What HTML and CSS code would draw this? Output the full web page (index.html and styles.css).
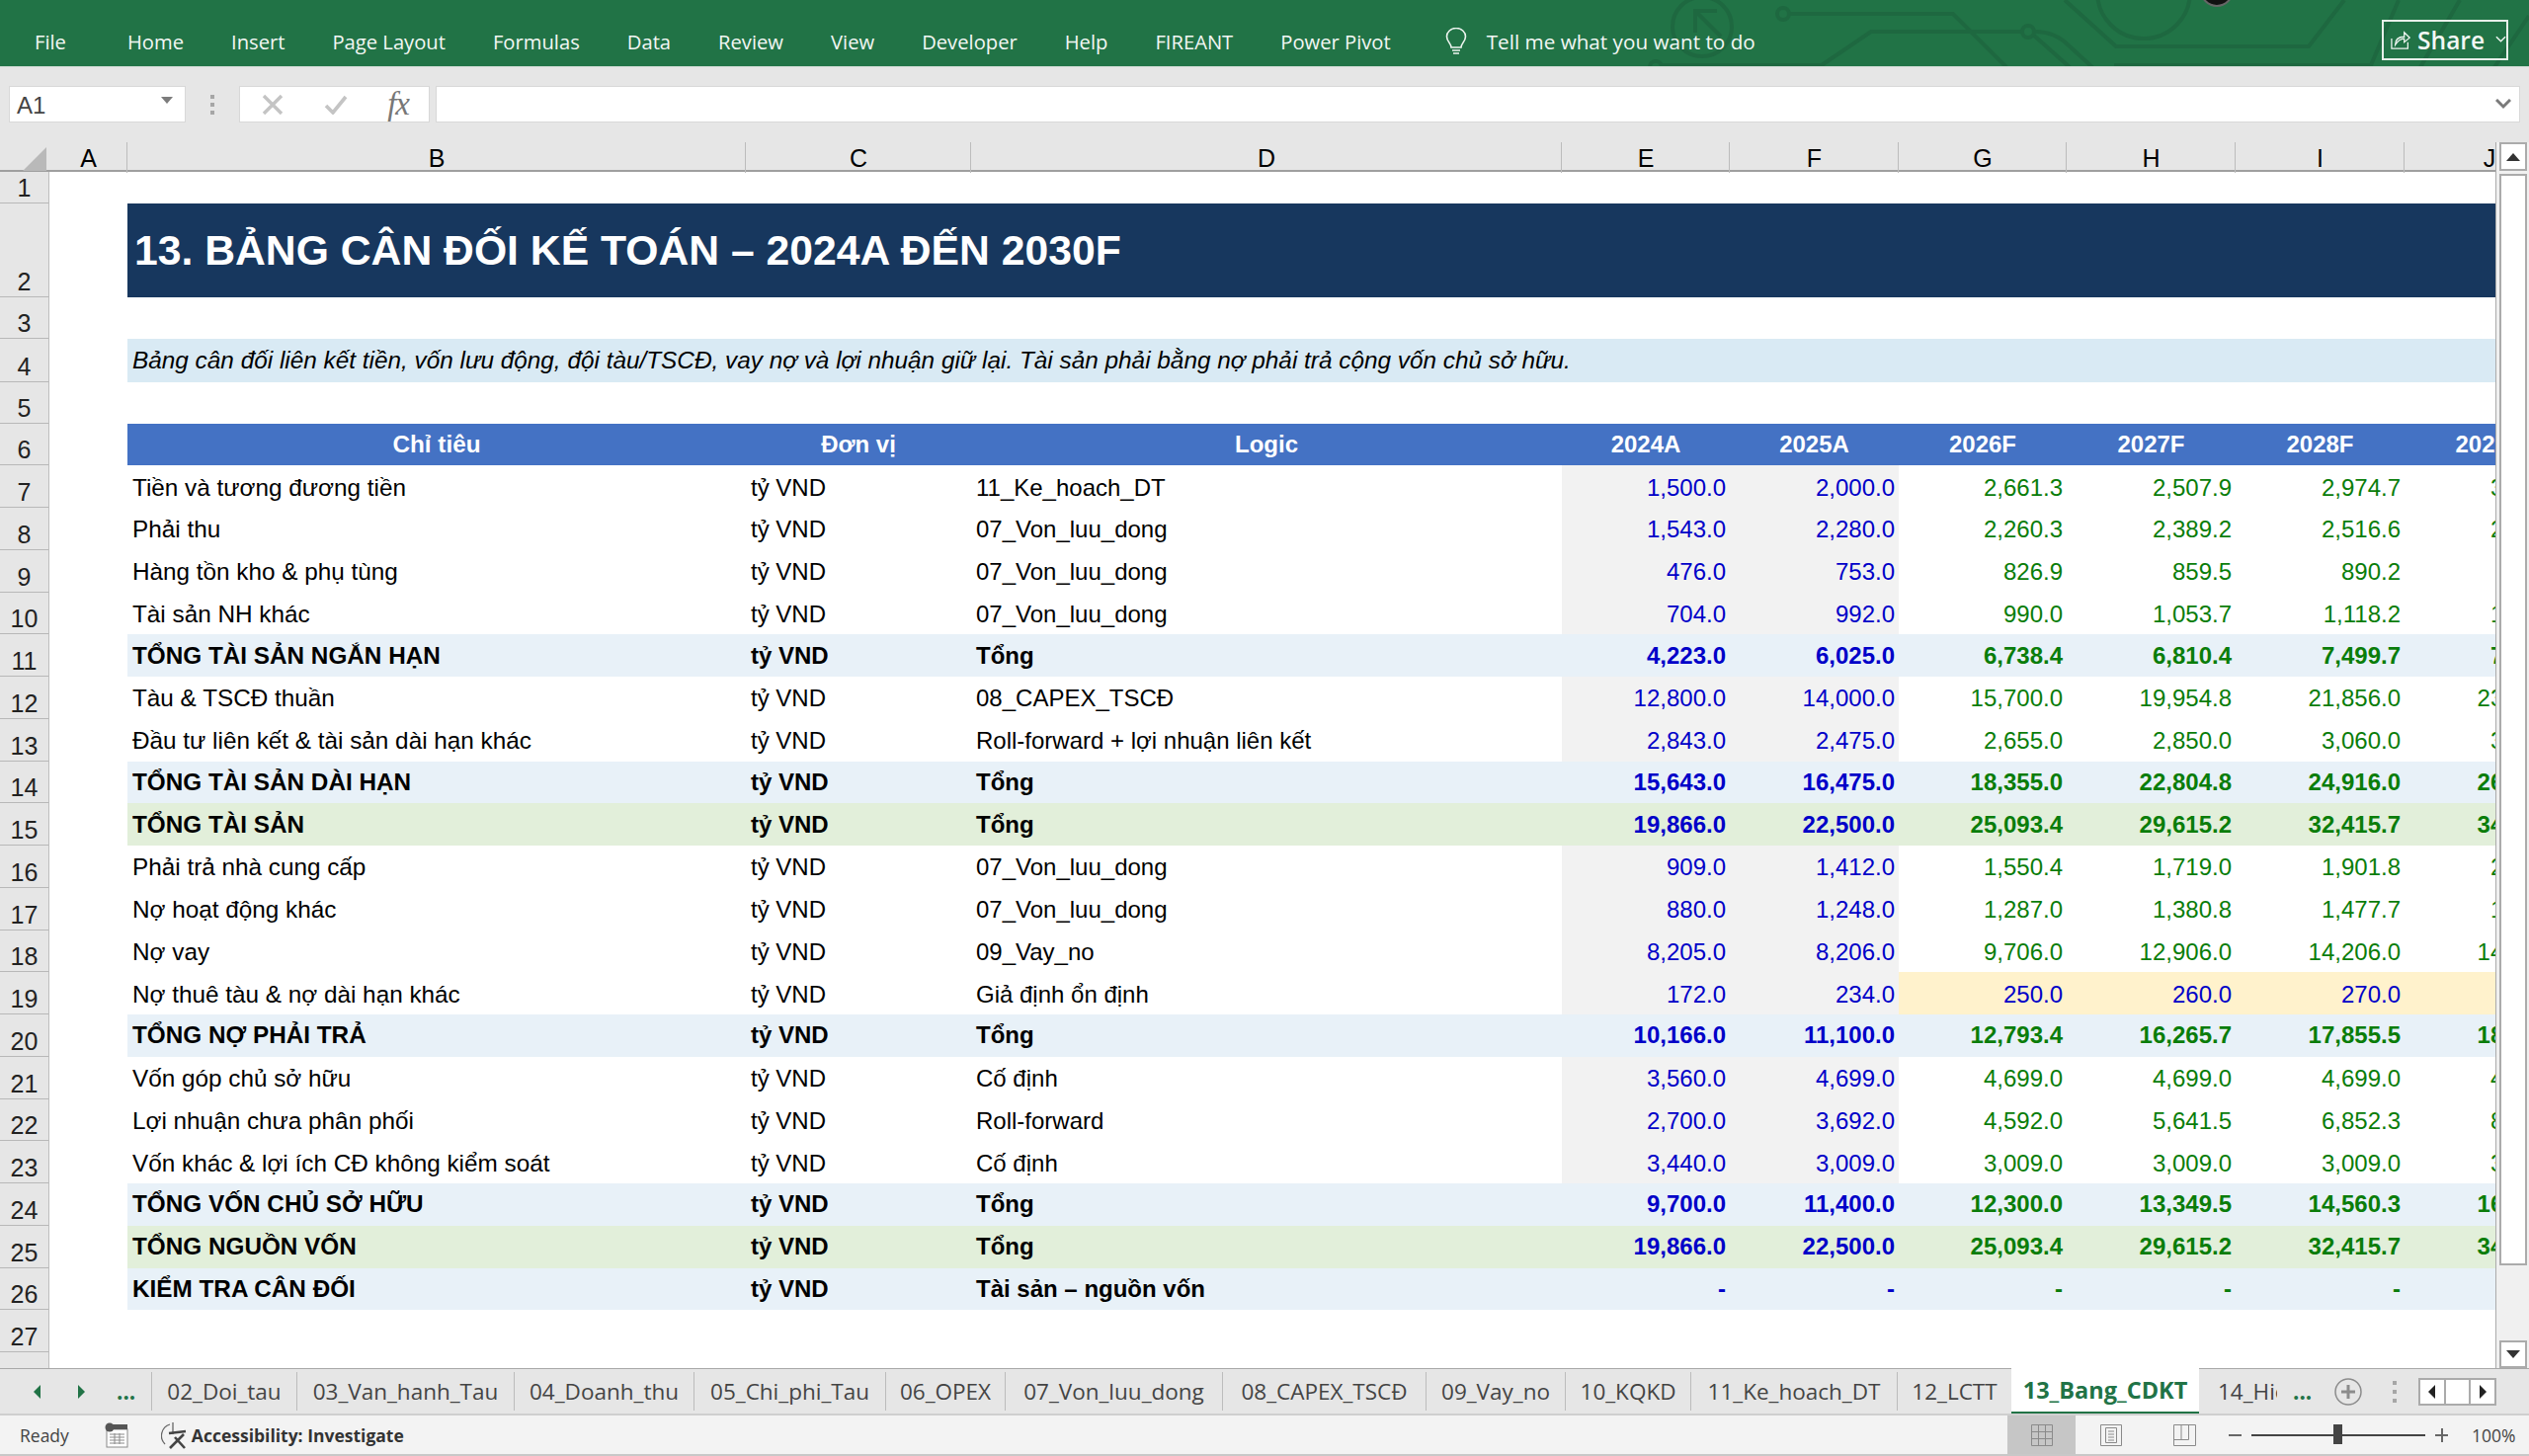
FILE: index.html
```html
<!DOCTYPE html>
<html lang="vi">
<head>
    <meta charset="UTF-8">
    <title>13_Bang_CDKT - Excel</title>
    <link rel="stylesheet" href="styles.css">
</head>
<body>

    <!-- Ribbon tabs -->
    <div class="ribbon">
        <svg class="circuit" width="900" height="68" viewBox="1660 0 900 68" fill="none">
            <circle cx="1723" cy="27" r="30"/>
            <path d="M1738 11h-22v22M1716 11l26 26"/>
            <circle cx="1805" cy="14" r="6"/>
            <path d="M1811 14h166l54 54"/>
            <circle cx="1676" cy="68" r="6"/>
            <path d="M1682 66h162l50-34h152"/>
            <circle cx="2053" cy="32" r="6"/>
            <path d="M2059 36l36 32M2060 32q20 0 34 14l24 22"/>
            <path d="M2090 0l52 47h195l36-47"/>
            <path d="M2123-8a47 47 0 0 0 94 0"/>
            <path d="M2140 66h260l28-66M2450 68l40-68M2525 68l35-52"/>
            <circle class="avatar" cx="2244" cy="-10" r="16"/>
        </svg>
        <div class="tab-list">
            <span class="tab tab--file">File</span>
            <span class="tab">Home</span>
            <span class="tab">Insert</span>
            <span class="tab">Page Layout</span>
            <span class="tab">Formulas</span>
            <span class="tab">Data</span>
            <span class="tab">Review</span>
            <span class="tab">View</span>
            <span class="tab">Developer</span>
            <span class="tab">Help</span>
            <span class="tab">FIREANT</span>
            <span class="tab">Power Pivot</span>
        </div>
        <div class="tell-me">
            <svg width="22" height="28" viewBox="0 0 22 28" fill="none" stroke="#eef5f0" stroke-width="1.6">
                <path d="M6 20c0-4-4.5-6-4.5-11a9.5 8.5 0 0 1 19 0c0 5-4.500 7-4.500 11z"/>
                <path d="M7 23h8M8 26h6"/>
            </svg>
            <span>Tell me what you want to do</span>
        </div>
        <div class="share-btn">
            <svg width="22" height="22" viewBox="0 0 22 22" fill="none" stroke="#eef5f0" stroke-width="1.4">
                <path d="M1 10v11h18v-7M5 17c0-6 4-9 10-9V3l6 6-6 5v-4c-4 0-7 2-10 7z"/>
            </svg>
            <span>Share</span>
            <svg width="12" height="8" viewBox="0 0 12 8" fill="none" stroke="#eef5f0" stroke-width="1.6">
                <path d="M1 1l5 5 5-5"/>
            </svg>
        </div>
    </div>

    <!-- Name box and formula input -->
    <div class="formula-bar">
        <div class="name-box">
            <span>A1</span>
            <i class="caret-down"></i>
        </div>
        <div class="grip"><i></i><i></i><i></i></div>
        <div class="fx-box">
            <svg width="22" height="22" viewBox="0 0 22 22" fill="none" stroke="#c4c4c4" stroke-width="3.400">
                <path d="M2 2l18 18M20 2L2 20"/>
            </svg>
            <svg width="24" height="20" viewBox="0 0 24 20" fill="none" stroke="#c4c4c4" stroke-width="3.600">
                <path d="M2 11l7 7L22 2"/>
            </svg>
            <span class="fx-label">fx</span>
        </div>
        <div class="formula-input">
            <svg width="16" height="11" viewBox="0 0 16 11" fill="none" stroke="#7a7a7a" stroke-width="3">
                <path d="M1 1l7 7 7-7"/>
            </svg>
        </div>
    </div>

    <!-- Sheet -->
    <div class="sheet-area">
        <div class="grid">
            <div class="row col-heads">
                <div class="corner"><i></i></div>
                <div class="col-head">A</div>
                <div class="col-head">B</div>
                <div class="col-head">C</div>
                <div class="col-head">D</div>
                <div class="col-head">E</div>
                <div class="col-head">F</div>
                <div class="col-head">G</div>
                <div class="col-head">H</div>
                <div class="col-head">I</div>
                <div class="col-head">J</div>
            </div>

            <div class="row r1"><div class="rn">1</div></div>
            <div class="row r2">
                <div class="rn">2</div>
                <div class="title-cell">13. BẢNG CÂN ĐỐI KẾ TOÁN – 2024A ĐẾN 2030F</div>
            </div>
            <div class="row r3"><div class="rn">3</div></div>
            <div class="row r4">
                <div class="rn">4</div>
                <div class="note-cell">Bảng cân đối liên kết tiền, vốn lưu động, đội tàu/TSCĐ, vay nợ và lợi nhuận giữ lại. Tài sản phải bằng nợ phải trả cộng vốn chủ sở hữu.</div>
            </div>
            <div class="row r5"><div class="rn">5</div></div>

            <div class="row row--head">
                <div class="rn">6</div><div></div>
                <div class="cell">Chỉ tiêu</div><div class="cell">Đơn vị</div><div class="cell">Logic</div>
                <div class="cell">2024A</div><div class="cell">2025A</div><div class="cell">2026F</div><div class="cell">2027F</div><div class="cell">2028F</div><div class="cell">2029F</div>
            </div>

            <div class="row">
                <div class="rn">7</div><div></div>
                <div class="cell">Tiền và tương đương tiền</div><div class="cell">tỷ VND</div><div class="cell">11_Ke_hoach_DT</div>
                <div class="cell num hist">1,500.0</div><div class="cell num hist">2,000.0</div>
                <div class="cell num calc">2,661.3</div><div class="cell num calc">2,507.9</div><div class="cell num calc">2,974.7</div><div class="cell num calc">3,412.6</div>
            </div>
            <div class="row">
                <div class="rn">8</div><div></div>
                <div class="cell">Phải thu</div><div class="cell">tỷ VND</div><div class="cell">07_Von_luu_dong</div>
                <div class="cell num hist">1,543.0</div><div class="cell num hist">2,280.0</div>
                <div class="cell num calc">2,260.3</div><div class="cell num calc">2,389.2</div><div class="cell num calc">2,516.6</div><div class="cell num calc">2,640.7</div>
            </div>
            <div class="row">
                <div class="rn">9</div><div></div>
                <div class="cell">Hàng tồn kho &amp; phụ tùng</div><div class="cell">tỷ VND</div><div class="cell">07_Von_luu_dong</div>
                <div class="cell num hist">476.0</div><div class="cell num hist">753.0</div>
                <div class="cell num calc">826.9</div><div class="cell num calc">859.5</div><div class="cell num calc">890.2</div><div class="cell num calc">919.0</div>
            </div>
            <div class="row">
                <div class="rn">10</div><div></div>
                <div class="cell">Tài sản NH khác</div><div class="cell">tỷ VND</div><div class="cell">07_Von_luu_dong</div>
                <div class="cell num hist">704.0</div><div class="cell num hist">992.0</div>
                <div class="cell num calc">990.0</div><div class="cell num calc">1,053.7</div><div class="cell num calc">1,118.2</div><div class="cell num calc">1,180.9</div>
            </div>
            <div class="row row--sub">
                <div class="rn">11</div><div></div>
                <div class="cell">TỔNG TÀI SẢN NGẮN HẠN</div><div class="cell">tỷ VND</div><div class="cell">Tổng</div>
                <div class="cell num hist">4,223.0</div><div class="cell num hist">6,025.0</div>
                <div class="cell num calc">6,738.4</div><div class="cell num calc">6,810.4</div><div class="cell num calc">7,499.7</div><div class="cell num calc">7,953.2</div>
            </div>
            <div class="row">
                <div class="rn">12</div><div></div>
                <div class="cell">Tàu &amp; TSCĐ thuần</div><div class="cell">tỷ VND</div><div class="cell">08_CAPEX_TSCĐ</div>
                <div class="cell num hist">12,800.0</div><div class="cell num hist">14,000.0</div>
                <div class="cell num calc">15,700.0</div><div class="cell num calc">19,954.8</div><div class="cell num calc">21,856.0</div><div class="cell num calc">23,500.0</div>
            </div>
            <div class="row">
                <div class="rn">13</div><div></div>
                <div class="cell">Đầu tư liên kết &amp; tài sản dài hạn khác</div><div class="cell">tỷ VND</div><div class="cell">Roll-forward + lợi nhuận liên kết</div>
                <div class="cell num hist">2,843.0</div><div class="cell num hist">2,475.0</div>
                <div class="cell num calc">2,655.0</div><div class="cell num calc">2,850.0</div><div class="cell num calc">3,060.0</div><div class="cell num calc">3,280.0</div>
            </div>
            <div class="row row--sub">
                <div class="rn">14</div><div></div>
                <div class="cell">TỔNG TÀI SẢN DÀI HẠN</div><div class="cell">tỷ VND</div><div class="cell">Tổng</div>
                <div class="cell num hist">15,643.0</div><div class="cell num hist">16,475.0</div>
                <div class="cell num calc">18,355.0</div><div class="cell num calc">22,804.8</div><div class="cell num calc">24,916.0</div><div class="cell num calc">26,780.0</div>
            </div>
            <div class="row row--total">
                <div class="rn">15</div><div></div>
                <div class="cell">TỔNG TÀI SẢN</div><div class="cell">tỷ VND</div><div class="cell">Tổng</div>
                <div class="cell num hist">19,866.0</div><div class="cell num hist">22,500.0</div>
                <div class="cell num calc">25,093.4</div><div class="cell num calc">29,615.2</div><div class="cell num calc">32,415.7</div><div class="cell num calc">34,733.2</div>
            </div>
            <div class="row">
                <div class="rn">16</div><div></div>
                <div class="cell">Phải trả nhà cung cấp</div><div class="cell">tỷ VND</div><div class="cell">07_Von_luu_dong</div>
                <div class="cell num hist">909.0</div><div class="cell num hist">1,412.0</div>
                <div class="cell num calc">1,550.4</div><div class="cell num calc">1,719.0</div><div class="cell num calc">1,901.8</div><div class="cell num calc">2,010.5</div>
            </div>
            <div class="row">
                <div class="rn">17</div><div></div>
                <div class="cell">Nợ hoạt động khác</div><div class="cell">tỷ VND</div><div class="cell">07_Von_luu_dong</div>
                <div class="cell num hist">880.0</div><div class="cell num hist">1,248.0</div>
                <div class="cell num calc">1,287.0</div><div class="cell num calc">1,380.8</div><div class="cell num calc">1,477.7</div><div class="cell num calc">1,560.3</div>
            </div>
            <div class="row">
                <div class="rn">18</div><div></div>
                <div class="cell">Nợ vay</div><div class="cell">tỷ VND</div><div class="cell">09_Vay_no</div>
                <div class="cell num hist">8,205.0</div><div class="cell num hist">8,206.0</div>
                <div class="cell num calc">9,706.0</div><div class="cell num calc">12,906.0</div><div class="cell num calc">14,206.0</div><div class="cell num calc">14,706.0</div>
            </div>
            <div class="row">
                <div class="rn">19</div><div></div>
                <div class="cell">Nợ thuê tàu &amp; nợ dài hạn khác</div><div class="cell">tỷ VND</div><div class="cell">Giả định ổn định</div>
                <div class="cell num hist">172.0</div><div class="cell num hist">234.0</div>
                <div class="cell num assume">250.0</div><div class="cell num assume">260.0</div><div class="cell num assume">270.0</div><div class="cell num assume">280.0</div>
            </div>
            <div class="row row--sub">
                <div class="rn">20</div><div></div>
                <div class="cell">TỔNG NỢ PHẢI TRẢ</div><div class="cell">tỷ VND</div><div class="cell">Tổng</div>
                <div class="cell num hist">10,166.0</div><div class="cell num hist">11,100.0</div>
                <div class="cell num calc">12,793.4</div><div class="cell num calc">16,265.7</div><div class="cell num calc">17,855.5</div><div class="cell num calc">18,557.0</div>
            </div>
            <div class="row">
                <div class="rn">21</div><div></div>
                <div class="cell">Vốn góp chủ sở hữu</div><div class="cell">tỷ VND</div><div class="cell">Cố định</div>
                <div class="cell num hist">3,560.0</div><div class="cell num hist">4,699.0</div>
                <div class="cell num calc">4,699.0</div><div class="cell num calc">4,699.0</div><div class="cell num calc">4,699.0</div><div class="cell num calc">4,699.0</div>
            </div>
            <div class="row">
                <div class="rn">22</div><div></div>
                <div class="cell">Lợi nhuận chưa phân phối</div><div class="cell">tỷ VND</div><div class="cell">Roll-forward</div>
                <div class="cell num hist">2,700.0</div><div class="cell num hist">3,692.0</div>
                <div class="cell num calc">4,592.0</div><div class="cell num calc">5,641.5</div><div class="cell num calc">6,852.3</div><div class="cell num calc">8,468.2</div>
            </div>
            <div class="row">
                <div class="rn">23</div><div></div>
                <div class="cell">Vốn khác &amp; lợi ích CĐ không kiểm soát</div><div class="cell">tỷ VND</div><div class="cell">Cố định</div>
                <div class="cell num hist">3,440.0</div><div class="cell num hist">3,009.0</div>
                <div class="cell num calc">3,009.0</div><div class="cell num calc">3,009.0</div><div class="cell num calc">3,009.0</div><div class="cell num calc">3,009.0</div>
            </div>
            <div class="row row--sub">
                <div class="rn">24</div><div></div>
                <div class="cell">TỔNG VỐN CHỦ SỞ HỮU</div><div class="cell">tỷ VND</div><div class="cell">Tổng</div>
                <div class="cell num hist">9,700.0</div><div class="cell num hist">11,400.0</div>
                <div class="cell num calc">12,300.0</div><div class="cell num calc">13,349.5</div><div class="cell num calc">14,560.3</div><div class="cell num calc">16,176.2</div>
            </div>
            <div class="row row--total">
                <div class="rn">25</div><div></div>
                <div class="cell">TỔNG NGUỒN VỐN</div><div class="cell">tỷ VND</div><div class="cell">Tổng</div>
                <div class="cell num hist">19,866.0</div><div class="cell num hist">22,500.0</div>
                <div class="cell num calc">25,093.4</div><div class="cell num calc">29,615.2</div><div class="cell num calc">32,415.7</div><div class="cell num calc">34,733.2</div>
            </div>
            <div class="row row--sub">
                <div class="rn">26</div><div></div>
                <div class="cell">KIỂM TRA CÂN ĐỐI</div><div class="cell">tỷ VND</div><div class="cell">Tài sản – nguồn vốn</div>
                <div class="cell num hist">-</div><div class="cell num hist">-</div>
                <div class="cell num calc">-</div><div class="cell num calc">-</div><div class="cell num calc">-</div><div class="cell num calc">-</div>
            </div>
            <div class="row"><div class="rn">27</div></div>
            <div class="row r28"><div class="rn"></div></div>
        </div>

        <div class="vscroll">
            <div class="scroll-btn"><i class="tri-up"></i></div>
            <div class="scroll-thumb"></div>
            <div class="scroll-track"></div>
            <div class="scroll-btn scroll-btn--down"><i class="tri-down"></i></div>
        </div>
    </div>

    <!-- Sheet tabs -->
    <div class="tabs-bar">
        <div class="tab-nav">
            <i class="nav-left"></i>
            <i class="nav-right"></i>
            <span class="more">...</span>
        </div>
        <div class="sheet-tab w147">02_Doi_tau</div>
        <div class="sheet-tab w220">03_Van_hanh_Tau</div>
        <div class="sheet-tab w182">04_Doanh_thu</div>
        <div class="sheet-tab w194">05_Chi_phi_Tau</div>
        <div class="sheet-tab w121">06_OPEX</div>
        <div class="sheet-tab w220">07_Von_luu_dong</div>
        <div class="sheet-tab w206">08_CAPEX_TSCĐ</div>
        <div class="sheet-tab w141">09_Vay_no</div>
        <div class="sheet-tab w127">10_KQKD</div>
        <div class="sheet-tab w209">11_Ke_hoach_DT</div>
        <div class="sheet-tab w116">12_LCTT</div>
        <div class="sheet-tab sheet-tab--active">13_Bang_CDKT</div>
        <div class="sheet-tab sheet-tab--cut">14_Hiệu_qua</div>
        <span class="more more--tabs">...</span>
        <div class="add-sheet">
            <svg width="28" height="28" viewBox="0 0 28 28" fill="none">
                <circle cx="14" cy="14" r="13" stroke="#8c8c8c" stroke-width="1.500"/>
                <path d="M14 7v14M7 14h14" stroke="#8c8c8c" stroke-width="3"/>
            </svg>
        </div>
        <div class="grip grip--tabs"><i></i><i></i><i></i></div>
        <div class="hscroll">
            <div class="hscroll-btn"><i class="nav-left nav-left--dark"></i></div>
            <div class="hscroll-btn"></div>
            <div class="hscroll-btn"><i class="nav-right nav-right--dark"></i></div>
        </div>
    </div>

    <!-- Status bar -->
    <div class="status-bar">
        <span class="ready">Ready</span>
        <svg class="macro-icon" width="24" height="26" viewBox="0 0 24 26" fill="none">
            <rect x="2" y="7" width="21" height="18" fill="#fff" stroke="#8a8a8a"/>
            <rect x="8" y="2" width="15" height="5" fill="#555"/>
            <circle cx="5" cy="5" r="4.500" fill="#555"/>
            <path d="M5 12h15M5 15h15M5 18h15M5 21h15M10 11v11M15 11v11" stroke="#8a8a8a"/>
        </svg>
        <svg class="access-icon" width="26" height="28" viewBox="0 0 26 28" fill="none">
            <path d="M12 1v12M9 3a12 12 0 0 0-5 20" stroke="#666" stroke-width="1.300"/>
            <path d="M9 27l14-14M14 16l10 11M8 12l17-2" stroke="#444" stroke-width="2.600"/>
        </svg>
        <b class="access-text">Accessibility: Investigate</b>

        <div class="status-right">
            <div class="view-btn view-btn--on">
                <svg width="22" height="22" viewBox="0 0 22 22" fill="none" stroke="#8a8a8a">
                    <path d="M.5.5h21v21H.5zM.5 7.500h21M.5 14.500h21M7.500.5v21M14.500.5v21"/>
                </svg>
            </div>
            <div class="view-btn">
                <svg width="22" height="22" viewBox="0 0 22 22" fill="none" stroke="#8a8a8a">
                    <path d="M.5.5h21v21H.5zM5.500 3.500h11v15h-11zM8 7h6M8 10h6M8 13h6M8 16h6"/>
                </svg>
            </div>
            <div class="view-btn view-btn--wide">
                <svg width="23" height="22" viewBox="0 0 23 22" fill="none" stroke="#8a8a8a">
                    <path d="M.5.5h22v21H.5zM.5 15.500h15V.5M8 .5v15"/>
                </svg>
            </div>
            <div class="zoom-slider">
                <i class="zoom-minus"></i>
                <div class="zoom-track"><i class="zoom-thumb"></i></div>
                <i class="zoom-plus"></i>
            </div>
            <span class="zoom-pct">100%</span>
        </div>
    </div>

</body>
</html>
```

FILE: styles.css
```css
/* General */
* {
    box-sizing: border-box;
}

body {
    margin: 0;
    width: 2560px;
    height: 1474px;
    display: flex;
    flex-direction: column;
    overflow: hidden;
    background: #e6e6e6;
    font-family: "Liberation Sans", Arial, sans-serif;
    color: #000;
}

i {
    display: block;
}

/* Ribbon */
.ribbon {
    position: relative;
    height: 68px;
    flex: none;
    display: flex;
    align-items: center;
    padding: 16px 21px 0 35px;
    background: #217346;
    border-bottom: 1px solid #cfdcd4;
    color: #f2f7f4;
    font-family: "Open Sans", sans-serif;
    font-size: 20.2px;
    overflow: hidden;
}

.circuit {
    position: absolute;
    left: 1660px;
    top: 0;
    stroke: #1e6840;
    stroke-width: 4;
}

.circuit .avatar {
    fill: #111;
    stroke: #666;
    stroke-width: 2;
}

.tab-list {
    position: relative;
    display: flex;
    gap: 48px;
}

.tab--file {
    margin-right: 14px;
}

.tell-me {
    position: relative;
    display: flex;
    align-items: center;
    gap: 20px;
    margin-left: 55px;
    font-size: 20.7px;
}

.share-btn {
    position: relative;
    margin-left: auto;
    margin-top: -3px;
    width: 128px;
    height: 41px;
    display: flex;
    align-items: center;
    padding-left: 7px;
    border: 2px solid #e6efe9;
    font-size: 24.5px;
    font-weight: 600;
}

.share-btn span {
    margin: 0 11px 0 7px;
}

/* Formula bar */
.formula-bar {
    height: 76px;
    flex: none;
    display: flex;
    padding: 19px 9px 20px;
    background: #e6e6e6;
}

.name-box {
    width: 179px;
    display: flex;
    align-items: center;
    justify-content: space-between;
    padding: 2px 12px 0 7px;
    background: #fff;
    border: 1px solid #d8d8d8;
    font-size: 24px;
    color: #444;
}

.caret-down {
    width: 0;
    height: 0;
    margin-bottom: 10px;
    border-left: 6px solid transparent;
    border-right: 6px solid transparent;
    border-top: 7px solid #7c7c7c;
}

.grip {
    display: flex;
    flex-direction: column;
    justify-content: center;
    gap: 4px;
    width: 54px;
    align-items: center;
}

.grip i {
    width: 4px;
    height: 4px;
    background: #a6a6a6;
}

.fx-box {
    width: 193px;
    display: flex;
    align-items: center;
    padding: 0 20px 0 22px;
    justify-content: space-between;
    background: #fff;
    border: 1px solid #d8d8d8;
}

.fx-label {
    font-family: "Liberation Serif", serif;
    font-style: italic;
    font-size: 33px;
    letter-spacing: -1px;
    color: #777;
}

.formula-input {
    flex: 1;
    margin-left: 6px;
    display: flex;
    align-items: center;
    justify-content: flex-end;
    padding-right: 8px;
    background: #fff;
    border: 1px solid #d8d8d8;
}

/* Sheet */
.sheet-area {
    flex: 1;
    min-height: 0;
    display: flex;
    background: #fff;
    border-bottom: 1px solid #a8a8a8;
}

.grid {
    flex: 1;
    min-width: 0;
    overflow: hidden;
    display: flex;
    flex-direction: column;
}

.row {
    display: grid;
    grid-template-columns: 50px 79px 626px 228px 598px 170px 171px 170px 171px 171px 171px;
    width: 2605px;
    height: 42.76px;
    flex: none;
    font-size: 24px;
}

.rn {
    display: flex;
    align-items: flex-end;
    justify-content: center;
    background: #e6e6e6;
    border-right: 1px solid #bdbdbd;
    border-bottom: 1px solid #b8b8b8;
    font-size: 25px;
    line-height: 30px;
    color: #222;
}

.col-heads {
    height: 30px;
    background: #e6e6e6;
    border-bottom: 2px solid #9f9f9f;
}

.corner {
    display: flex;
    align-items: flex-end;
    justify-content: flex-end;
    padding: 0 3px 2px 0;
}

.corner i {
    width: 0;
    height: 0;
    border-left: 24px solid transparent;
    border-bottom: 24px solid #b9b9b9;
}

.col-head {
    display: flex;
    align-items: center;
    justify-content: center;
    padding: 2px 0 0 1px;
    font-size: 25px;
    border-right: 1px solid #bcbcbc;
}

.col-head:last-child {
    border-right: none;
}

.r1 {
    height: 32px;
}

.r2 {
    height: 95px;
}

.r3 {
    height: 42px;
}

.r4 {
    height: 44px;
}

.r5 {
    height: 41.5px;
}

.r28 {
    flex: 1;
    height: auto;
}

.r28 .rn {
    border-bottom: none;
}

.title-cell {
    grid-column: 3 / -1;
    display: flex;
    align-items: center;
    padding-left: 7px;
    background: #17375e;
    color: #fff;
    font-size: 42.7px;
    font-weight: bold;
}

.note-cell {
    grid-column: 3 / -1;
    display: flex;
    align-items: center;
    padding-left: 5px;
    background: #d9eaf4;
    font-size: 24.35px;
    font-style: italic;
}

.cell {
    display: flex;
    align-items: center;
    padding: 2px 5px 0;
    white-space: nowrap;
    overflow: hidden;
}

/* first column labels run a touch wider than the numbers */
.row > .cell:nth-child(3) {
    font-size: 24.3px;
}

.num {
    justify-content: flex-end;
    padding-right: 4px;
}

.hist {
    background: #f2f2f2;
    color: #0000c8;
}

.calc {
    color: #0a7d0a;
}

.assume {
    background: #fff2cc;
    color: #0000c8;
}

/* Table header and subtotal rows */
.row--head .cell {
    justify-content: center;
    padding-top: 1px;
    background: #4472c4;
    color: #fff;
    font-weight: bold;
}

.row--sub .cell {
    padding-top: 0;
    background: #e8f1f8;
    font-weight: bold;
}

.row--total .cell {
    padding-top: 0;
    background: #e2efda;
    font-weight: bold;
}

/* Vertical scrollbar */
.vscroll {
    width: 34px;
    flex: none;
    display: flex;
    flex-direction: column;
    padding: 0 2px 0 3px;
    background: #f0f0f0;
    border-left: 1px solid #ababab;
}

.scroll-btn {
    height: 29px;
    flex: none;
    display: flex;
    align-items: center;
    justify-content: center;
    background: #fff;
    border: 2px solid #ababab;
}

.scroll-btn--down {
    height: 28px;
}

.tri-up,
.tri-down {
    width: 0;
    height: 0;
    border-left: 7px solid transparent;
    border-right: 7px solid transparent;
}

.tri-up {
    border-bottom: 8px solid #333;
}

.tri-down {
    border-top: 8px solid #333;
}

.scroll-thumb {
    height: 1105px;
    flex: none;
    margin-top: 3px;
    background: #fff;
    border: 2px solid #ababab;
}

.scroll-track {
    flex: 1;
}

/* Sheet tabs */
.tabs-bar {
    height: 47px;
    flex: none;
    display: flex;
    align-items: stretch;
    background: #e6e6e6;
    border-bottom: 2px solid #cfcfcf;
    font-family: "Open Sans", sans-serif;
    font-size: 22.5px;
    color: #444;
}

.tab-nav {
    width: 153px;
    flex: none;
    display: flex;
    align-items: center;
    padding-left: 34px;
}

.nav-left,
.nav-right {
    width: 0;
    height: 0;
    border-top: 7px solid transparent;
    border-bottom: 7px solid transparent;
}

.nav-left {
    border-right: 7px solid #217346;
}

.nav-right {
    margin-left: 38px;
    border-left: 7px solid #217346;
}

.nav-left--dark {
    border-right-color: #222;
}

.nav-right--dark {
    margin-left: 0;
    border-left-color: #222;
}

.more {
    margin-left: 32px;
    color: #217346;
    font-weight: 700;
}

.more--tabs {
    margin-left: 16px;
    align-self: center;
    width: 33px;
    flex: none;
}

.sheet-tab {
    display: flex;
    align-items: center;
    justify-content: center;
    flex: none;
    white-space: nowrap;
    overflow: hidden;
    margin: 3px 0 3px;
    border-left: 1px solid #bcbcbc;
}

.w147 { width: 147px; }
.w220 { width: 220px; }
.w182 { width: 182px; }
.w194 { width: 194px; }
.w121 { width: 121px; }
.w206 { width: 206px; }
.w141 { width: 141px; }
.w127 { width: 127px; }
.w209 { width: 209px; }
.w116 { width: 116px; }

.sheet-tab--active {
    width: 190px;
    margin: -1px 0 0;
    border-left: none;
    background: #fff;
    border-bottom: 2px solid #217346;
    color: #217346;
    font-size: 23.5px;
    font-weight: 700;
}

.sheet-tab--cut {
    width: 79px;
    border-left: none;
    justify-content: flex-start;
    padding-left: 19px;
}

.add-sheet {
    width: 46px;
    flex: none;
    display: flex;
    align-items: center;
    justify-content: center;
}

.grip--tabs {
    width: 48px;
    flex: none;
    gap: 5px;
}

.hscroll {
    width: 79px;
    height: 28px;
    flex: none;
    align-self: center;
    display: flex;
    background: #fff;
    border: 2px solid #ababab;
}

.hscroll-btn {
    flex: 1;
    display: flex;
    align-items: center;
    justify-content: center;
    border-right: 2px solid #ababab;
}

.hscroll-btn:last-child {
    border-right: none;
}

/* Status bar */
.status-bar {
    height: 41px;
    flex: none;
    display: flex;
    align-items: center;
    padding-left: 20px;
    background: #f3f3f3;
    border-bottom: 2px solid #c8c8c8;
    font-family: "Open Sans", sans-serif;
    font-size: 17.5px;
    color: #444;
}

.macro-icon {
    margin-left: 36px;
}

.access-icon {
    margin-left: 33px;
}

.access-text {
    margin-left: 5px;
    color: #333;
}

.status-right {
    margin-left: auto;
    height: 100%;
    display: flex;
    align-items: center;
}

.view-btn {
    width: 72px;
    height: 100%;
    display: flex;
    align-items: center;
    justify-content: center;
}

.view-btn--on {
    width: 69px;
    background: #c6c6c6;
}

.view-btn--wide {
    width: 76px;
}

.zoom-slider {
    display: flex;
    align-items: center;
    margin-left: 7px;
}

.zoom-minus {
    width: 13px;
    height: 2px;
    background: #666;
}

.zoom-track {
    position: relative;
    width: 176px;
    height: 2px;
    margin: 0 10px;
    background: #444;
}

.zoom-thumb {
    position: absolute;
    left: 83px;
    top: -10px;
    width: 9px;
    height: 20px;
    background: #444;
}

.zoom-plus {
    position: relative;
    width: 13px;
    height: 2px;
    background: #666;
}

.zoom-plus::after {
    content: "";
    position: absolute;
    left: 5.500px;
    top: -6px;
    width: 2px;
    height: 14px;
    background: #666;
}

.zoom-pct {
    margin-left: 24px;
    width: 58px;
}
```
